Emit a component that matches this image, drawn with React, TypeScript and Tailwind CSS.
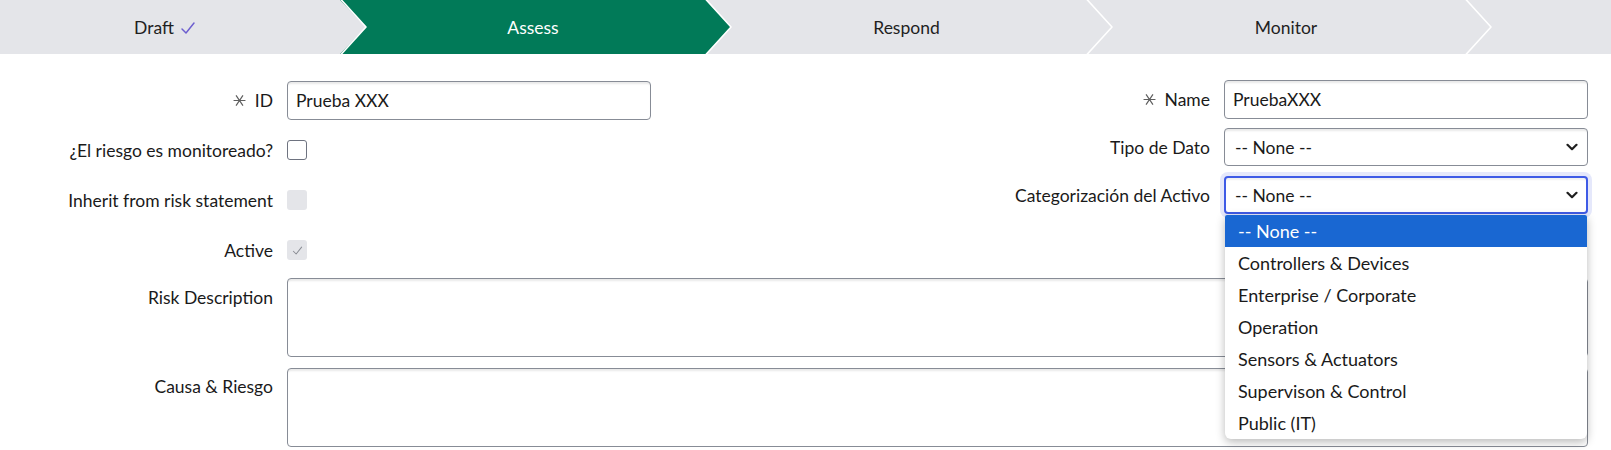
import React from "react";

// ── Icons ─────────────────────────────────────────────────────────────────────

function Asterisk() {
  return (
    <svg width="13" height="13" viewBox="0 0 12 12" fill="none" stroke="#5f5f5f" strokeWidth="1.1" className="mr-[9px] shrink-0">
      <path d="M0.5 6h11M2.8 1.2l6.4 9.6M9.2 1.2l-6.4 9.6" />
    </svg>
  );
}

function Chevron() {
  return (
    <svg width="12" height="8" viewBox="0 0 12 8" fill="none" stroke="#1f1f1f" strokeWidth="2.2" strokeLinecap="round" strokeLinejoin="round">
      <path d="M1.5 1.8L6 6.2l4.5-4.4" />
    </svg>
  );
}

function Tick({ color, size = 12 }: { color: string; size?: number }) {
  return (
    <svg width={size} height={size} viewBox="0 0 12 12" fill="none" stroke={color} strokeWidth="1.1" strokeLinecap="round" strokeLinejoin="round">
      <path d="M1.5 6.8l3 3 6-7.5" />
    </svg>
  );
}

// the white arrow between two steps; `fill` says which side is the active green
function StepSeparator({ fill }: { fill?: "left" | "right" }) {
  return (
    <svg width="27" height="54" viewBox="0 0 27 54" className="shrink-0 block">
      {fill === "right" && <path d="M0 0L26 27 0 54H27V0z" fill="#017a58" />}
      {fill === "left" && <path d="M0 0H1L26 27 1 54H0z" fill="#017a58" />}
      <path d="M0.5 -1L26 27 0.5 55" stroke="white" strokeWidth="1.6" fill="none" strokeLinejoin="round" />
    </svg>
  );
}

// ── Sub-components ────────────────────────────────────────────────────────────

function Stepper() {
  return (
    <div className="flex h-[54px] bg-[#e4e5e9] text-[17.5px]">
      <div className="w-[340px] flex items-center justify-center text-[#1f1f1f] pr-[10px]">
        Draft
        <span className="ml-[6px] mt-[1px]"><Tick color="#6c5ecf" size={16} /></span>
      </div>
      <StepSeparator fill="right" />
      <div className="w-[338px] flex items-center justify-center bg-[#017a58] text-white pr-[6px]">Assess</div>
      <StepSeparator fill="left" />
      <div className="w-[354px] flex items-center justify-center text-[#1f1f1f] pr-[5px]">Respond</div>
      <StepSeparator />
      <div className="w-[352px] flex items-center justify-center text-[#1f1f1f] pr-[6px]">Monitor</div>
      <StepSeparator />
      <div className="flex-1" />
    </div>
  );
}

function Label({ children, required }: { children: React.ReactNode; required?: boolean }) {
  return (
    <div className="w-[273px] shrink-0 flex items-center justify-end text-right text-[#1a1a1a]">
      {required && <Asterisk />}
      {children}
    </div>
  );
}

function TextInput({ value }: { value: string }) {
  return (
    <div className="w-[364px] h-[39px] flex items-center px-[8px] rounded-[4px] border border-[#878c96] bg-white shadow-[inset_0_3px_2px_-1px_rgba(0,0,0,0.09)] text-[#1a1a1a]">
      {value}
    </div>
  );
}

function Checkbox({ state }: { state: "empty" | "disabled" | "disabledChecked" }) {
  if (state === "empty") {
    return <div className="w-[20px] h-[20px] rounded-[3px] border border-[#6e7380] bg-white" />;
  }
  return (
    <div className="w-[20px] h-[20px] rounded-[3px] bg-[#e4e5e9] flex items-center justify-center">
      {state === "disabledChecked" && <Tick color="#8a8d94" size={11} />}
    </div>
  );
}

const OPTIONS = [
  "-- None --",
  "Controllers & Devices",
  "Enterprise / Corporate",
  "Operation",
  "Sensors & Actuators",
  "Supervison & Control",
  "Public (IT)",
];

function Select({ open }: { open?: boolean }) {
  return (
    <div className="relative w-[364px]">
      <div
        className={
          open
            ? "h-[38px] flex items-center justify-between pl-[9px] pr-[8px] rounded-[4px] border-2 border-[#3f5be6] ring-4 ring-[#e5e8fb] bg-white shadow-[inset_0_3px_2px_-1px_rgba(0,0,0,0.06)]"
            : "h-[38px] flex items-center justify-between pl-[10px] pr-[9px] rounded-[4px] border border-[#878c96] bg-white shadow-[inset_0_3px_2px_-1px_rgba(0,0,0,0.09)]"
        }
      >
        <span className="text-[#1a1a1a]">-- None --</span>
        <Chevron />
      </div>
      {open && (
        <div className="absolute left-[1px] top-[39px] w-[362px] z-10 bg-white rounded-b-[6px] rounded-t-[2px] overflow-hidden shadow-[0_3px_10px_rgba(0,0,0,0.28)] text-[18px]">
          {OPTIONS.map((opt, i) => (
            <div
              key={opt}
              className={
                i === 0
                  ? "h-[32px] flex items-center pl-[13px] bg-[#1967d2] text-white"
                  : "h-[32px] flex items-center pl-[13px] text-[#1a1a1a]"
              }
            >
              {opt}
            </div>
          ))}
        </div>
      )}
    </div>
  );
}

// ── Screen ────────────────────────────────────────────────────────────────────

export default function App() {
  return (
    <div className="w-[1611px] h-[450px] overflow-hidden bg-white font-['Lato',sans-serif] text-[17.5px] leading-[21px]">
      <Stepper />

      <div className="pt-[21px]">
        <div className="flex">
          {/* left column */}
          <div className="w-[937px] shrink-0">
            <div className="h-[50px] flex items-center gap-[14px]">
              <Label required>ID</Label>
              <TextInput value="Prueba XXX" />
            </div>
            <div className="h-[50px] flex items-center gap-[14px]">
              <Label>¿El riesgo es monitoreado?</Label>
              <Checkbox state="empty" />
            </div>
            <div className="h-[50px] flex items-center gap-[14px]">
              <Label>Inherit from risk statement</Label>
              <Checkbox state="disabled" />
            </div>
            <div className="h-[50px] flex items-center gap-[14px]">
              <Label>Active</Label>
              <Checkbox state="disabledChecked" />
            </div>
          </div>

          {/* right column */}
          <div className="w-[651px] shrink-0">
            <div className="h-[48px] flex items-center gap-[14px]">
              <Label required>Name</Label>
              <TextInput value="PruebaXXX" />
            </div>
            <div className="h-[48px] flex items-center gap-[14px]">
              <Label>Tipo de Dato</Label>
              <Select />
            </div>
            <div className="h-[48px] flex items-center gap-[14px] relative z-10">
              <Label>Categorización del Activo</Label>
              <Select open />
            </div>
          </div>
        </div>

        {/* text areas */}
        <div className="mt-[3px] flex gap-[14px]">
          <div className="w-[273px] shrink-0 text-right pt-[9px] text-[#1a1a1a]">Risk Description</div>
          <div className="w-[1301px] h-[79px] rounded-[4px] border border-[#878c96] bg-white shadow-[inset_0_3px_2px_-1px_rgba(0,0,0,0.09)]" />
        </div>
        <div className="mt-[11px] flex gap-[14px]">
          <div className="w-[273px] shrink-0 text-right pt-[8px] text-[#1a1a1a]">Causa &amp; Riesgo</div>
          <div className="w-[1301px] h-[79px] rounded-[4px] border border-[#878c96] bg-white shadow-[inset_0_3px_2px_-1px_rgba(0,0,0,0.09)]" />
        </div>
      </div>
    </div>
  );
}
